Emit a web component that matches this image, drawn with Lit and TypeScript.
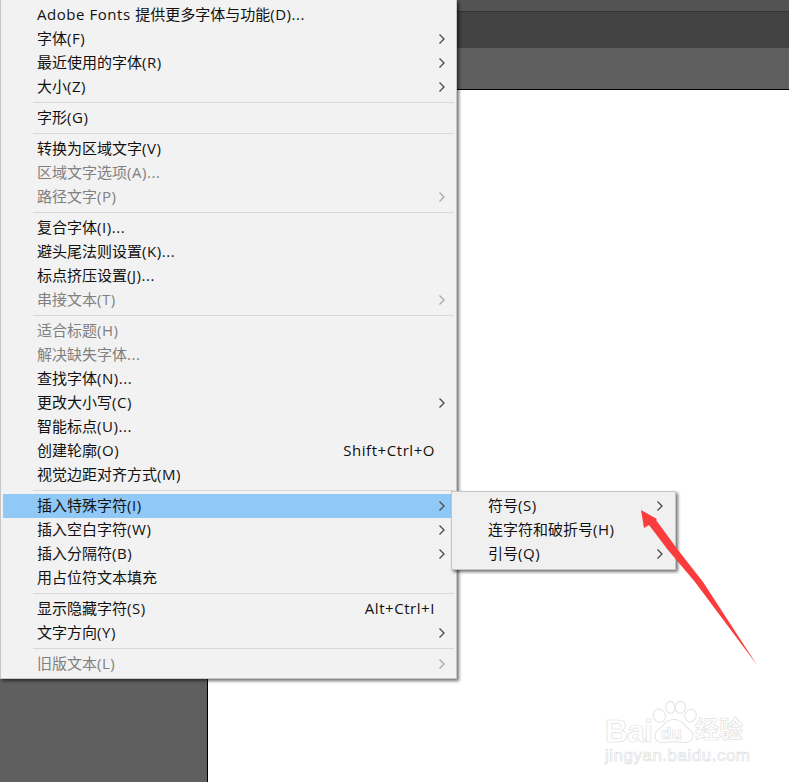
import { LitElement, html, css, svg } from "lit";
import { customElement } from "lit/decorators.js";

type Item = { t: string; sub?: boolean; off?: boolean; key?: string; on?: boolean } | null;

const MENU: Item[] = [
  { t: "Adobe Fonts 提供更多字体与功能(D)..." },
  { t: "字体(F)", sub: true },
  { t: "最近使用的字体(R)", sub: true },
  { t: "大小(Z)", sub: true },
  null,
  { t: "字形(G)" },
  null,
  { t: "转换为区域文字(V)" },
  { t: "区域文字选项(A)...", off: true },
  { t: "路径文字(P)", off: true, sub: true },
  null,
  { t: "复合字体(I)..." },
  { t: "避头尾法则设置(K)..." },
  { t: "标点挤压设置(J)..." },
  { t: "串接文本(T)", off: true, sub: true },
  null,
  { t: "适合标题(H)", off: true },
  { t: "解决缺失字体...", off: true },
  { t: "查找字体(N)..." },
  { t: "更改大小写(C)", sub: true },
  { t: "智能标点(U)..." },
  { t: "创建轮廓(O)", key: "Shift+Ctrl+O" },
  { t: "视觉边距对齐方式(M)" },
  null,
  { t: "插入特殊字符(I)", sub: true, on: true },
  { t: "插入空白字符(W)", sub: true },
  { t: "插入分隔符(B)", sub: true },
  { t: "用占位符文本填充" },
  null,
  { t: "显示隐藏字符(S)", key: "Alt+Ctrl+I" },
  { t: "文字方向(Y)", sub: true },
  null,
  { t: "旧版文本(L)", off: true, sub: true },
];

const SUB: Item[] = [
  { t: "符号(S)", sub: true },
  { t: "连字符和破折号(H)", sub: true },
  { t: "引号(Q)", sub: true },
];

const chevron = svg`<svg class="chev" width="8" height="12" viewBox="0 0 8 12"><path d="M1.5 1.5 L6 6 L1.5 10.5" fill="none" stroke="currentColor" stroke-width="1.3"/></svg>`;

const runs = (s: string) =>
  s.split(/([\x20-\x7e]+)/).filter(Boolean).map((p) =>
    /^[\x20-\x7e]/.test(p) ? html`<span class="la">${p}</span>` : p
  );

@customElement("app-root")
export class AppRoot extends LitElement {
  static styles = css`
    :host {
      display: block;
      position: relative;
      width: 789px;
      height: 782px;
      overflow: hidden;
      font-family: "Open Sans", "Noto Sans CJK SC", sans-serif;
      font-size: 15px;
      color: #111;
    }
    .stage { display: flex; flex-direction: column; height: 782px; }
    .bar-top { height: 11px; background: #535353; border-bottom: 1px solid #333; }
    .bar-tabs { height: 36px; background: #424242; }
    .bar-ruler { height: 41px; background: #5f5f5f; border-bottom: 1px solid #000; }
    .work { flex: 1; display: grid; grid-template-columns: 208px 1fr; }
    .side { background: #5f5f5f; border-right: 1px solid #000; }
    .page { background: #fff; }

    .menu {
      position: absolute;
      box-sizing: border-box;
      background: #f2f2f2;
      border: 1px solid #c6c6c6;
      padding: 2px;
      box-shadow: 2px 2px 3px rgba(0, 0, 0, 0.55);
    }
    .main { left: 0; top: 0; width: 457px; height: 679px; border-top: 0; padding-top: 3px; }
    .subm { left: 451px; top: 491px; width: 225px; height: 79px; background: #f0f0f0; }

    .row {
      box-sizing: border-box;
      display: grid;
      grid-template-columns: 1fr auto 16px;
      align-items: center;
      height: 24px;
      line-height: 22px;
      white-space: nowrap;
      padding: 0 4px 2px 34px;
    }
    .subm .row { padding-right: 5px; }
    .row.on { background: #90c8f6; margin-right: 1px; padding-right: 3px; }
    .row.off { color: #808080; }
    .la { letter-spacing: 0.55px; }
    .key { margin-right: -1px; }
    .chev { justify-self: center; color: #4a4a4a; margin-top: 2px; }
    .row.off .chev { color: #a8a8a8; }
    .sep { height: 1px; background: #d8d8d8; margin: 3px 0 3px 30px; }

    .arrow { position: absolute; left: 630px; top: 500px; }
    .mark {
      position: absolute;
      left: 600px;
      top: 700px;
      width: 180px;
      height: 70px;
      color: #fff;
      -webkit-text-stroke: 0.7px #e2e2e2;
      font-family: "Liberation Sans", "Noto Sans CJK SC", sans-serif;
    }
    .mark svg { position: absolute; left: 51px; top: 0; }
    .mark .bai {
      position: absolute;
      left: 5px;
      top: 14px;
      font-size: 32px;
      line-height: 34px;
      font-weight: 700;
      letter-spacing: -1px;
    }
    .mark .du {
      position: absolute;
      left: 61px;
      top: 25px;
      font-size: 17px;
      line-height: 18px;
      font-weight: 700;
    }
    .mark .jy {
      position: absolute;
      left: 95px;
      top: 16px;
      font-size: 24px;
      line-height: 28px;
      font-weight: 700;
    }
    .mark .url {
      position: absolute;
      left: 5px;
      top: 47px;
      font-size: 17px;
      line-height: 18px;
      letter-spacing: 0.5px;
    }
  `;

  private row(i: Item) {
    if (!i) return html`<div class="sep"></div>`;
    const cls = "row" + (i.on ? " on" : "") + (i.off ? " off" : "");
    return html`<div class=${cls}>
      <span>${runs(i.t)}</span>
      <span class="la key">${i.key ?? ""}</span>
      ${i.sub ? chevron : html`<span></span>`}
    </div>`;
  }

  render() {
    return html`
      <div class="stage">
        <div class="bar-top"></div>
        <div class="bar-tabs"></div>
        <div class="bar-ruler"></div>
        <div class="work"><div class="side"></div><div class="page"></div></div>
      </div>
      <div class="mark">
        <div class="bai">Bai</div>
        <svg width="46" height="46" viewBox="0 0 50 46" fill="#fff" stroke="#e4e4e4" stroke-width="1.1">
          <ellipse cx="9" cy="15" rx="6.5" ry="7.5" transform="rotate(-25 9 15)"/>
          <ellipse cx="21" cy="6" rx="5" ry="6.5"/>
          <ellipse cx="32" cy="6" rx="5.5" ry="6.5"/>
          <ellipse cx="43" cy="15" rx="6" ry="7" transform="rotate(25 43 15)"/>
          <path d="M25 19 C34 19 37 27 43 31 C49 37 44 46 35 44 C28 43 22 43 15 44 C6 46 1 38 7 31 C13 27 16 19 25 19 Z"/>
        </svg>
        <div class="du">du</div>
        <div class="jy">经验</div>
        <div class="url">jingyan.baidu.com</div>
      </div>
      <div class="menu main">${MENU.map((i) => this.row(i))}</div>
      <div class="menu subm">${SUB.map((i) => this.row(i))}</div>
      <svg class="arrow" width="135" height="170" viewBox="630 500 135 170">
        <polygon points="641,510 657,519 656,520 678,550 703,582 757,665 695,582 668,550 649,525 644,528" fill="#fb3c3c"/>
      </svg>
    `;
  }
}
